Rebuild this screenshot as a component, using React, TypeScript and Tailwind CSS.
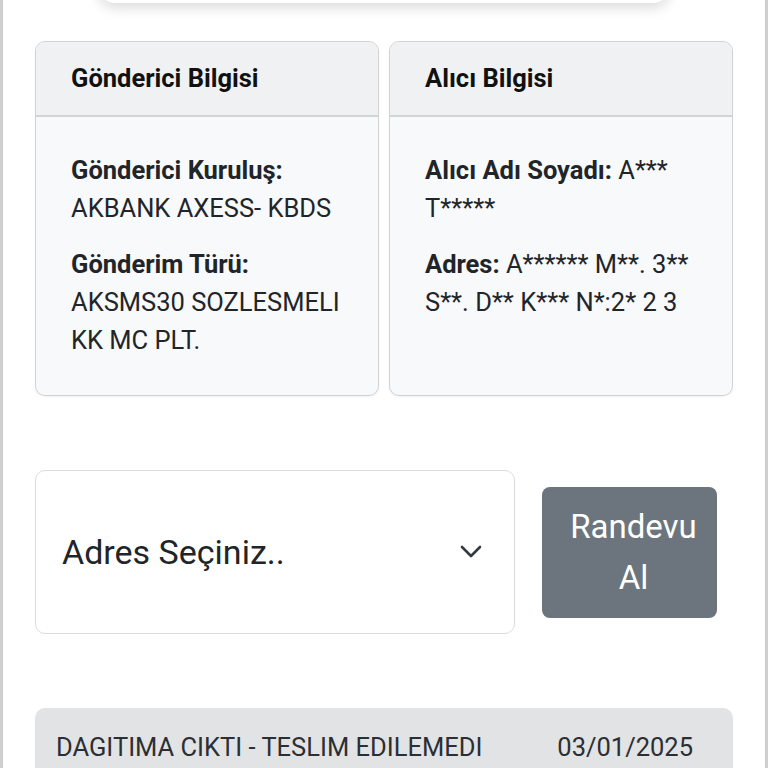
import React from "react";

export default function App() {
  const font = { fontFamily: "Roboto, 'Noto Sans', sans-serif" };
  return (
    <div style={font} className="w-[768px] h-[768px] overflow-hidden bg-white">
      <div className="min-h-[768px] border-x-[3px] border-[#cfcfcf] px-[32px] flex flex-col">
        <div className="mx-[65px] h-[40px] -mt-[37px] rounded-[14px] bg-white shadow-[0_4px_14px_rgba(0,0,0,0.16)]" />
        <div className="mt-[38px] grid grid-cols-2 gap-[10px]">
          <div className="rounded-[10px] border border-[#d3d3d3] bg-[#f8f9fa] overflow-hidden shadow-[0_1px_2px_rgba(0,0,0,0.06)]">
            <div className="h-[75px] bg-[#f0f1f2] border-b-2 border-[#d3d3d3] px-[35px] flex items-center text-[25.5px] font-bold text-[#111]">
              Gönderici Bilgisi
            </div>
            <div className="px-[35px] pt-[34px] pb-[36px] text-[25.5px] leading-[38px] text-[#212529]">
              <p className="font-bold">Gönderici Kuruluş:</p>
              <p>AKBANK AXESS- KBDS</p>
              <p className="mt-[18px] font-bold">Gönderim Türü:</p>
              <p>AKSMS30 SOZLESMELI KK MC PLT.</p>
            </div>
          </div>
          <div className="rounded-[10px] border border-[#d3d3d3] bg-[#f8f9fa] overflow-hidden shadow-[0_1px_2px_rgba(0,0,0,0.06)]">
            <div className="h-[75px] bg-[#f0f1f2] border-b-2 border-[#d3d3d3] px-[35px] flex items-center text-[25.5px] font-bold text-[#111]">
              Alıcı Bilgisi
            </div>
            <div className="px-[35px] pt-[34px] pb-[36px] text-[25.5px] leading-[38px] text-[#212529]">
              <p>
                <span className="font-bold">Alıcı Adı Soyadı:</span> A*** T*****
              </p>
              <p className="mt-[18px]">
                <span className="font-bold">Adres:</span> A****** M**. 3** S**. D** K*** N*:2* 2 3
              </p>
            </div>
          </div>
        </div>

        <div className="mt-[74px] flex items-center">
          <div className="w-[480px] h-[164px] rounded-[10px] border border-[#dcdcdc] bg-white flex items-center justify-between pl-[26px] pr-[32px]">
            <span className="text-[34px] text-[#212529]">Adres Seçiniz..</span>
            <svg width="22" height="14" viewBox="0 0 22 14" fill="none">
              <path d="M2 2l9 9 9-9" stroke="#343a40" strokeWidth="2.6" strokeLinecap="round" strokeLinejoin="round" />
            </svg>
          </div>
          <div className="ml-[27px] w-[175px] h-[131px] rounded-[8px] bg-[#6c757d] text-white text-[33px] leading-[51px] flex items-center justify-center text-center pl-[8px]">
            Randevu<br />Al
          </div>
        </div>

        <div className="mt-[74px] rounded-[10px] bg-[#e2e3e5] pl-[21px] pr-[40px] pt-[22px] pb-[24px] flex justify-between text-[25.5px] leading-[34px] text-[#2b2f33]">
          <span>DAGITIMA CIKTI - TESLIM EDILEMEDI</span>
          <span>03/01/2025</span>
        </div>
      </div>
    </div>
  );
}
